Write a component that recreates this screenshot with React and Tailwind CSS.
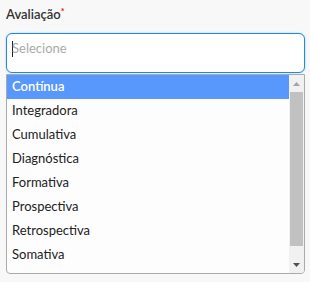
const options = [
  'Contínua',
  'Integradora',
  'Cumulativa',
  'Diagnóstica',
  'Formativa',
  'Prospectiva',
  'Retrospectiva',
  'Somativa',
  'Somativa',
];

export default function App() {
  return (
    <div className="h-[282px] w-[310px] bg-[#f8f8f8] px-[6px] pt-[6px] font-['Lato','Noto_Sans',sans-serif] text-[13px] text-[#222]">
      <label className="flex h-[18px] items-center font-semibold text-[#333]">
        Avaliação
        <span className="mb-[6px] text-[9px] text-[#e00]">*</span>
      </label>
      <div className="mt-[9px] h-[40px] w-[299px] rounded-[6px] border border-[#1e88f0] bg-white px-[5px] pt-[5px] shadow-[0_0_2px_rgba(30,136,240,0.4)]">
        <div className="flex items-center text-[#aaa]">
          <span className="mr-[-1px] inline-block h-[16px] w-[1px] bg-[#222]" />
          Selecione
        </div>
      </div>
      <div className="relative mt-[1px] flex h-[200px] w-[299px] overflow-hidden rounded-b-[4px] border border-[#aaa] bg-[#fdfdfd]">
        <ul className="flex-1 overflow-hidden">
          {options.map((o, i) => (
            <li
              key={i}
              className={`flex h-[24px] items-center px-[5px] ${
                i === 0 ? 'bg-[#5897fb] font-semibold text-white' : ''
              }`}
            >
              {o}
            </li>
          ))}
        </ul>
        <div className="flex w-[15px] flex-col bg-[#f1f1f1]">
          <div className="flex h-[17px] items-center justify-center">
            <svg width="7" height="4" viewBox="0 0 7 4">
              <path d="M3.5 0 7 4H0z" fill="#a3a3a3" />
            </svg>
          </div>
          <div className="mx-[1px] h-[154px] bg-[#c1c1c1]" />
          <div className="flex-1" />
          <div className="flex h-[17px] items-center justify-center">
            <svg width="7" height="4" viewBox="0 0 7 4">
              <path d="M0 0h7L3.5 4z" fill="#505050" />
            </svg>
          </div>
        </div>
      </div>
    </div>
  );
}
